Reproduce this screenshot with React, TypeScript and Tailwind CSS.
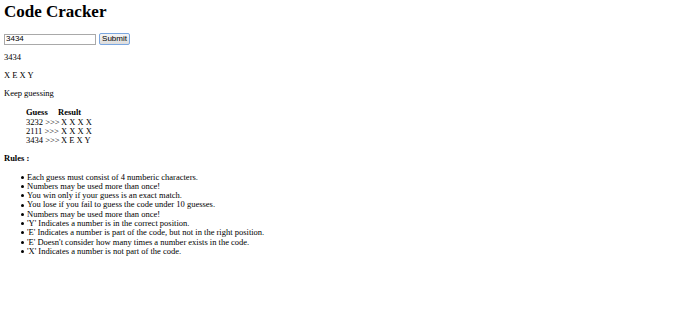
import React from "react";

const rows = [
  ["3232", "X X X X"],
  ["2111", "X X X X"],
  ["3434", "X E X Y"],
];

const rules = [
  "Each guess must consist of 4 numberic characters.",
  "Numbers may be used more than once!",
  "You win only if your guess is an exact match.",
  "You lose if you fail to guess the code under 10 guesses.",
  "Numbers may be used more than once!",
  "'Y' Indicates a number is in the correct position.",
  "'E' Indicates a number is part of the code, but not in the right position.",
  "'E' Doesn't consider how many times a number exists in the code.",
  "'X' Indicates a number is not part of the code.",
];

export default function App() {
  return (
    <div
      className="w-[700px] h-[315px] bg-white text-black pl-[4px] pt-[2px] text-[8.5px] leading-[9.3px]"
      style={{ fontFamily: '"Liberation Serif", "Times New Roman", serif' }}
    >
      <h1 className="text-[17px] leading-[20px] font-bold">Code Cracker</h1>
      <div className="mt-[11px] flex items-center h-[12px]">
        <div
          className="w-[92px] h-[11px] border border-[#a9a9a9] bg-white flex items-center pl-[1px] text-[8px]"
          style={{ fontFamily: '"Liberation Sans", Arial, sans-serif' }}
        >
          3434
        </div>
        <div
          className="ml-[3px] w-[31px] h-[12px] border border-[#7aa6e0] rounded-[2px] bg-gradient-to-b from-[#f6f6f6] to-[#dcdcdc] flex items-center justify-center text-[8px]"
          style={{ fontFamily: '"Liberation Sans", Arial, sans-serif' }}
        >
          Submit
        </div>
      </div>
      <p className="mt-[8.2px]">3434</p>
      <p className="mt-[8.7px]">X E X Y</p>
      <p className="mt-[8.7px]">Keep guessing</p>
      <div className="mt-[9.9px] pl-[22px]">
        <div className="flex font-bold">
          <span className="w-[32px]">Guess</span>
          <span>Result</span>
        </div>
        {rows.map(([g, r], i) => (
          <div key={i} className="flex">
            <span className="w-[35px] whitespace-nowrap">{g} &gt;&gt;&gt;</span>
            <span>{r}</span>
          </div>
        ))}
      </div>
      <p className="mt-[8px] font-bold">Rules :</p>
      <ul className="mt-[9.7px]">
        {rules.map((t, i) => (
          <li key={i} className="flex items-center">
            <span className="ml-[17px] w-[3px] h-[3px] rounded-full bg-black" />
            <span className="ml-[3px]">{t}</span>
          </li>
        ))}
      </ul>
    </div>
  );
}
